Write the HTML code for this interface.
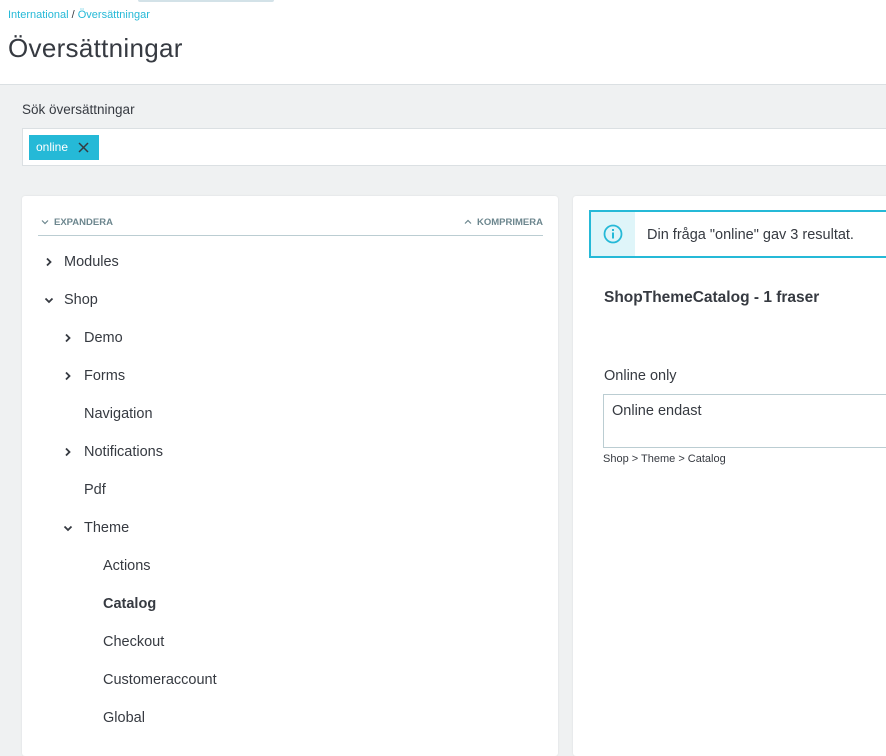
<!DOCTYPE html>
<html><head><meta charset="utf-8"><style>
*{box-sizing:border-box;margin:0;padding:0}
body{width:886px;height:750px;overflow:hidden;background:#eff1f2;font-family:"Liberation Sans",sans-serif;color:#363a41;position:relative}
.hdr{position:absolute;left:0;top:0;width:886px;height:85px;background:#fff;border-bottom:1px solid #dbe0e3}
.topbar{position:absolute;left:138px;top:0;width:136px;height:2px;background:#d3e2e8;border-radius:0 0 2px 2px}
.bc{position:absolute;left:8px;top:9px;font-size:11px;color:#25b9d7}
.bc span{color:#363a41}
h1{position:absolute;left:8px;top:33px;font-size:26px;font-weight:normal;color:#363a41;letter-spacing:.3px}
.lbl{position:absolute;left:22px;top:102px;font-size:13.5px}
.inp{position:absolute;left:22px;top:128px;width:880px;height:38px;background:#fff;border:1px solid #dbe0e3}
.tag{position:absolute;left:6px;top:6px;height:25px;width:70px;background:#25b9d7;color:#fff;font-size:12px;padding:5px 0 0 7px}
.tag svg{position:absolute;left:49px;top:7px}
.lp{position:absolute;left:22px;top:196px;width:536px;height:560px;background:#fff;border-radius:3px;box-shadow:0 0 2px rgba(0,0,0,.08)}
.rp{position:absolute;left:573px;top:196px;width:330px;height:560px;background:#fff;border-radius:3px;box-shadow:0 0 2px rgba(0,0,0,.08)}
.tb{position:absolute;left:16px;top:0;width:505px;height:40px;border-bottom:1px solid #bbcdd2;font-size:9.5px;font-weight:bold;color:#6c868e}
.tb .a{position:absolute;left:3px;top:21px}
.tb .b{position:absolute;right:0;top:21px}
.tb svg{vertical-align:middle;margin-right:5px}
.it{position:absolute;font-size:14.5px;color:#363a41}
.ch{position:absolute;width:12px;height:12px}
.al{position:absolute;left:16px;top:14px;width:320px;height:48px;border:2px solid #25b9d7;background:#fff}
.al .ic{position:absolute;left:0;top:0;width:44px;height:44px;background:#dff5f9}
.al .t{position:absolute;left:56px;top:15px;font-size:14.5px}
.ttl{position:absolute;left:31px;top:93px;font-size:15.5px;font-weight:bold}
.ol{position:absolute;left:31px;top:172px;font-size:14.5px}
.ta{position:absolute;left:30px;top:198px;width:300px;height:54px;border:1px solid #bbcdd2;font-size:14.5px;padding:8px 0 0 8px}
.pth{position:absolute;left:30px;top:257px;font-size:11px}
</style></head><body>
<div class="hdr"><div class="topbar"></div>
<div class="bc">International <span>/</span> Översättningar</div>
<h1>Översättningar</h1></div>
<div class="lbl">Sök översättningar</div>
<div class="inp"><div class="tag">online<svg width="11" height="11" viewBox="0 0 11 11"><path d="M1 1L10 10M10 1L1 10" stroke="#363a41" stroke-width="1.5"/></svg></div></div>

<div class="lp">
<div class="tb"><span class="a"><svg width="8" height="6" viewBox="0 0 8 6"><path d="M1 1.5L4 4.5L7 1.5" fill="none" stroke="#6c868e" stroke-width="1.2"/></svg>EXPANDERA</span><span class="b"><svg width="8" height="6" viewBox="0 0 8 6"><path d="M1 4.5L4 1.5L7 4.5" fill="none" stroke="#6c868e" stroke-width="1.2"/></svg>KOMPRIMERA</span></div>
<svg class="ch" style="left:21px;top:60px" viewBox="0 0 12 12"><path d="M4 2.5 L7.5 6 L4 9.5" fill="none" stroke="#363a41" stroke-width="1.8"/></svg>
<div class="it" style="left:42px;top:58px">Modules</div>
<svg class="ch" style="left:21px;top:98px" viewBox="0 0 12 12"><path d="M2.5 4.5 L6 8 L9.5 4.5" fill="none" stroke="#363a41" stroke-width="1.8"/></svg>
<div class="it" style="left:42px;top:96px">Shop</div>
<svg class="ch" style="left:40px;top:136px" viewBox="0 0 12 12"><path d="M4 2.5 L7.5 6 L4 9.5" fill="none" stroke="#363a41" stroke-width="1.8"/></svg>
<div class="it" style="left:62px;top:134px">Demo</div>
<svg class="ch" style="left:40px;top:174px" viewBox="0 0 12 12"><path d="M4 2.5 L7.5 6 L4 9.5" fill="none" stroke="#363a41" stroke-width="1.8"/></svg>
<div class="it" style="left:62px;top:172px">Forms</div>
<div class="it" style="left:62px;top:210px">Navigation</div>
<svg class="ch" style="left:40px;top:250px" viewBox="0 0 12 12"><path d="M4 2.5 L7.5 6 L4 9.5" fill="none" stroke="#363a41" stroke-width="1.8"/></svg>
<div class="it" style="left:62px;top:248px">Notifications</div>
<div class="it" style="left:62px;top:286px">Pdf</div>
<svg class="ch" style="left:40px;top:326px" viewBox="0 0 12 12"><path d="M2.5 4.5 L6 8 L9.5 4.5" fill="none" stroke="#363a41" stroke-width="1.8"/></svg>
<div class="it" style="left:62px;top:324px">Theme</div>
<div class="it" style="left:81px;top:362px">Actions</div>
<div class="it" style="left:81px;top:400px;font-weight:bold">Catalog</div>
<div class="it" style="left:81px;top:438px">Checkout</div>
<div class="it" style="left:81px;top:476px">Customeraccount</div>
<div class="it" style="left:81px;top:514px">Global</div>
</div>

<div class="rp">
<div class="al"><div class="ic"><svg style="position:absolute;left:12px;top:12px" width="20" height="20" viewBox="0 0 20 20"><circle cx="10" cy="10" r="8.5" fill="none" stroke="#25b9d7" stroke-width="1.8"/><rect x="9" y="8.5" width="2" height="6" fill="#25b9d7"/><rect x="9" y="5" width="2" height="2" fill="#25b9d7"/></svg></div>
<div class="t">Din fråga "online" gav 3 resultat.</div></div>
<div class="ttl">ShopThemeCatalog - 1 fraser</div>
<div class="ol">Online only</div>
<div class="ta">Online endast</div>
<div class="pth">Shop &gt; Theme &gt; Catalog</div>
</div>
</body></html>
